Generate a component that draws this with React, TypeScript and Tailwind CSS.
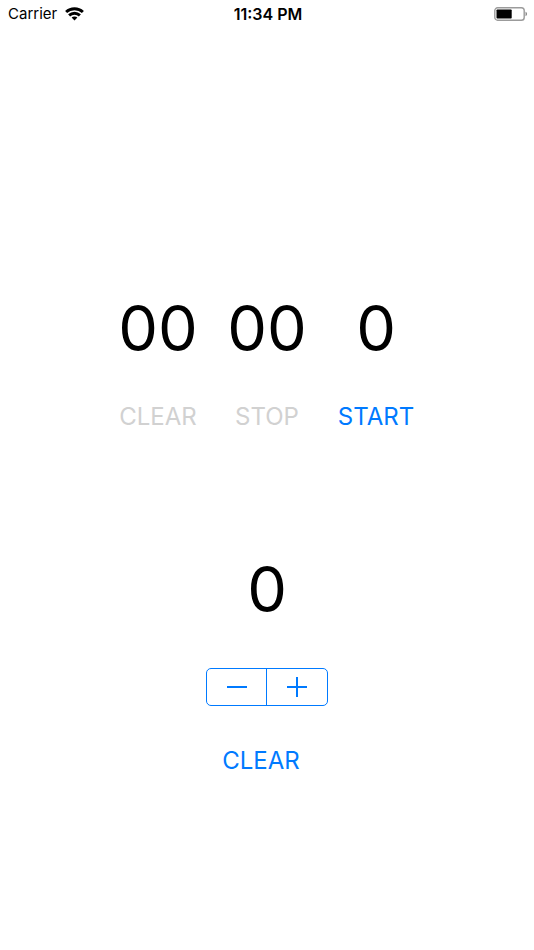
import { useEffect, useState } from "react";

const digits = "text-[63px] leading-[76px] text-center";
const action = "h-10 text-2xl leading-10 text-[#007aff] disabled:text-[#d1d1d1]";

function WifiIcon() {
  return (
    <svg width="19" height="14" viewBox="0 0 19 14" fill="none" stroke="black" strokeWidth="2.9" aria-hidden="true">
      <path d="M1.1 5C5.8 .7 13.2 .7 17.9 5" />
      <path d="M4.1 8.4C7.2 5.5 11.8 5.5 14.9 8.4" />
      <path d="M6.6 10.6C8.2 9.1 10.8 9.1 12.4 10.6L9.5 13.5Z" fill="black" stroke="none" />
    </svg>
  );
}

function BatteryIcon() {
  return (
    <svg width="34" height="14" viewBox="0 0 34 14" aria-hidden="true">
      <rect x=".8" y=".8" width="29.4" height="12.4" rx="2.8" fill="none" stroke="#9b9b9b" strokeWidth="1.4" />
      <rect x="2.5" y="2.4" width="15.2" height="9.2" rx=".8" fill="black" />
      <path d="M31.5 4.8C33.6 5.5 33.6 8.5 31.5 9.2Z" fill="#8b8b8b" />
    </svg>
  );
}

function StatusBar() {
  return (
    <header className="grid h-7 grid-cols-3 items-center pr-1.5 pl-2 text-[15px] leading-5">
      <div className="flex items-center gap-2">
        <span>Carrier</span>
        <WifiIcon />
      </div>
      <time className="text-center text-base leading-5 font-semibold">11:34 PM</time>
      <div className="flex justify-end">
        <BatteryIcon />
      </div>
    </header>
  );
}

export default function App() {
  const [ticks, setTicks] = useState(0);
  const [running, setRunning] = useState(false);
  const [count, setCount] = useState(0);

  useEffect(() => {
    if (!running) return;
    const timer = setInterval(() => setTicks((t) => t + 1), 100);
    return () => clearInterval(timer);
  }, [running]);

  const minutes = String(Math.floor(ticks / 600)).padStart(2, "0");
  const seconds = String(Math.floor(ticks / 10) % 60).padStart(2, "0");

  return (
    <div className="min-h-screen bg-white font-['Inter',sans-serif] text-black">
      <StatusBar />
      <main className="flex flex-col items-center pt-[262px]">
        <section aria-label="Stopwatch" className="grid grid-cols-[repeat(3,109px)] gap-y-[31px]">
          <span className={digits}>{minutes}</span>
          <span className={digits}>{seconds}</span>
          <span className={digits}>{ticks % 10}</span>
          <button className={action} disabled={ticks === 0} onClick={() => { setRunning(false); setTicks(0); }}>
            CLEAR
          </button>
          <button className={action} disabled={!running} onClick={() => setRunning(false)}>
            STOP
          </button>
          <button className={action} disabled={running} onClick={() => setRunning(true)}>
            START
          </button>
        </section>

        <section aria-label="Counter" className="flex flex-col items-center pt-[114px]">
          <output className={digits}>{count}</output>
          <div className="mt-[41px] grid h-[38px] w-[122px] grid-cols-2 divide-x divide-[#007aff] rounded-[5px] border border-[#007aff] text-[#007aff]">
            <button aria-label="Decrease" className="flex items-center justify-center" onClick={() => setCount((c) => Math.max(0, c - 1))}>
              <svg width="20" height="20" viewBox="0 0 20 20" stroke="currentColor" strokeWidth="2" aria-hidden="true">
                <path d="M0 10H20" />
              </svg>
            </button>
            <button aria-label="Increase" className="flex items-center justify-center" onClick={() => setCount((c) => c + 1)}>
              <svg width="20" height="20" viewBox="0 0 20 20" stroke="currentColor" strokeWidth="2" aria-hidden="true">
                <path d="M0 10H20M10 0V20" />
              </svg>
            </button>
          </div>
          <div className="pt-[35px] pr-3">
            <button className={action} onClick={() => setCount(0)}>
              CLEAR
            </button>
          </div>
        </section>
      </main>
    </div>
  );
}
